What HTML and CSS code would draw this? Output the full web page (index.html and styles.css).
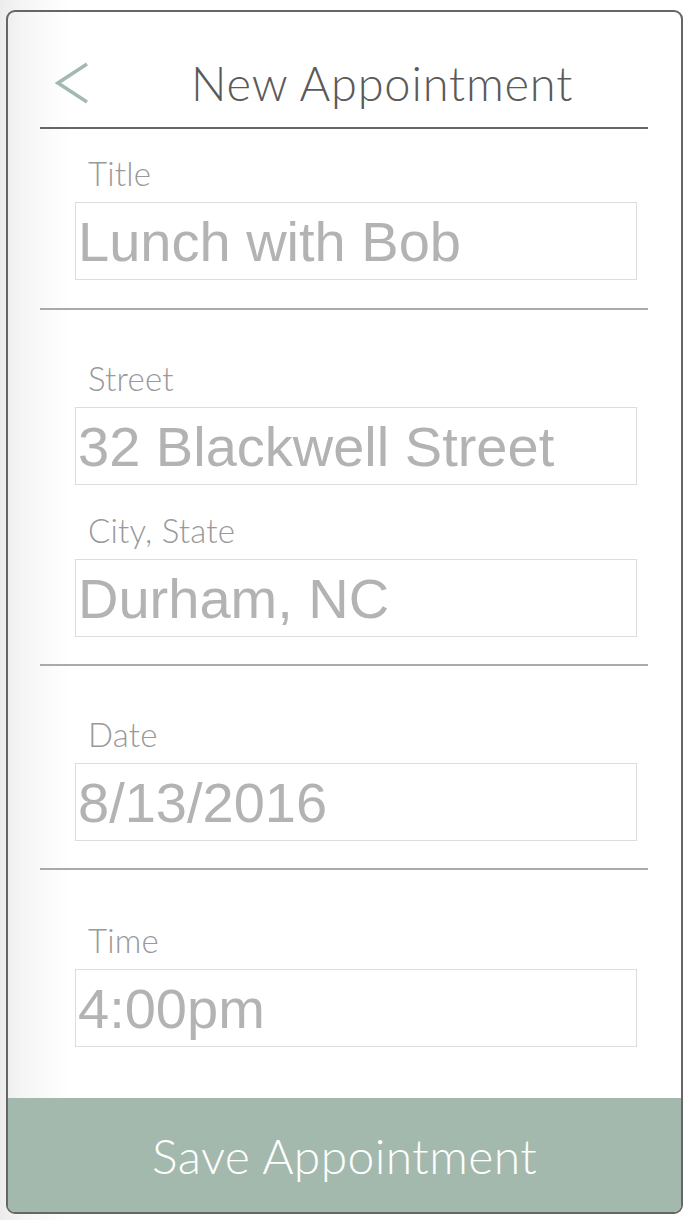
FILE: index.html
```html
<!DOCTYPE html>
<html lang="en">
<head>
<meta charset="utf-8">
<title>New Appointment</title>
<link rel="stylesheet" href="styles.css">
</head>
<body>
<div class="phone">
  <div class="content">
    <header class="header">
      <button class="back" aria-label="Back">
        <svg width="34" height="42" viewBox="0 0 34 42"><polyline points="32,2 3,21 32,40" fill="none" stroke="#a3bab0" stroke-width="3.5" stroke-linejoin="miter"/></svg>
      </button>
      <h1 class="title">New Appointment</h1>
    </header>

    <section class="section first">
      <div class="field">
        <label class="label">Title</label>
        <input class="input" type="text" value="Lunch with Bob">
      </div>
    </section>

    <section class="section">
      <div class="field">
        <label class="label">Street</label>
        <input class="input" type="text" value="32 Blackwell Street">
      </div>
      <div class="field">
        <label class="label">City, State</label>
        <input class="input" type="text" value="Durham, NC">
      </div>
    </section>

    <section class="section">
      <div class="field">
        <label class="label">Date</label>
        <input class="input" type="text" value="8/13/2016">
      </div>
    </section>

    <section class="section last">
      <div class="field">
        <label class="label">Time</label>
        <input class="input" type="text" value="4:00pm">
      </div>
    </section>
  </div>
  <button class="save">Save Appointment</button>
</div>
</body>
</html>
```

FILE: styles.css
```css
* { box-sizing: border-box; }

html, body {
  margin: 0;
  padding: 0;
  height: 1220px;
}

body {
  background: linear-gradient(to right, #ececec 0, #f6f6f6 25px, #ffffff 70px);
  font-family: Lato, "Open Sans", sans-serif;
  overflow: hidden;
}

.phone {
  margin: 10px 5px 0 6px;
  width: 677px;
  height: 1204px;
  border: 2px solid #666;
  border-radius: 9px;
  display: flex;
  flex-direction: column;
  overflow: hidden;
}

.content {
  padding: 0 33px 0 32px;
}

.header {
  display: flex;
  align-items: center;
  padding-top: 43px;
  padding-bottom: 16px;
  border-bottom: 2px solid #666;
}

.back {
  background: none;
  border: 0;
  padding: 0;
  margin: 0 0 0 15px;
  width: 34px;
  height: 42px;
  display: flex;
}

.title {
  margin: 0 0 0 102px;
  font-size: 47px;
  line-height: 56px;
  font-weight: 300;
  color: #5a5a5a;
  letter-spacing: 0.8px;
}

.section {
  padding: 48px 0 27px;
  border-bottom: 2px solid #aaa;
}

.section.first {
  padding: 24px 0 28px;
}

.section.last {
  padding-top: 50px;
  border-bottom: 0;
}

.field {
  display: flex;
  flex-direction: column;
}

.field + .field {
  margin-top: 25px;
}

.label {
  height: 40px;
  line-height: 40px;
  margin-bottom: 9px;
  padding-left: 48px;
  font-size: 33px;
  font-weight: 300;
  color: #999;
  letter-spacing: 0.2px;
}

.input {
  margin: 0 0 0 35px;
  width: 562px;
  height: 78px;
  border: 1px solid #ddd;
  padding: 0 0 0 2px;
  font-family: "Liberation Sans", Arial, sans-serif;
  font-size: 56px;
  color: #b3b3b3;
  background: transparent;
  outline: none;
}

.save {
  margin-top: auto;
  height: 114px;
  width: 100%;
  border: 0;
  background: #a3b9ae;
  color: #fff;
  font-family: Lato, "Open Sans", sans-serif;
  font-size: 48px;
  font-weight: 300;
  letter-spacing: 0.4px;
  padding: 0;
}
```
